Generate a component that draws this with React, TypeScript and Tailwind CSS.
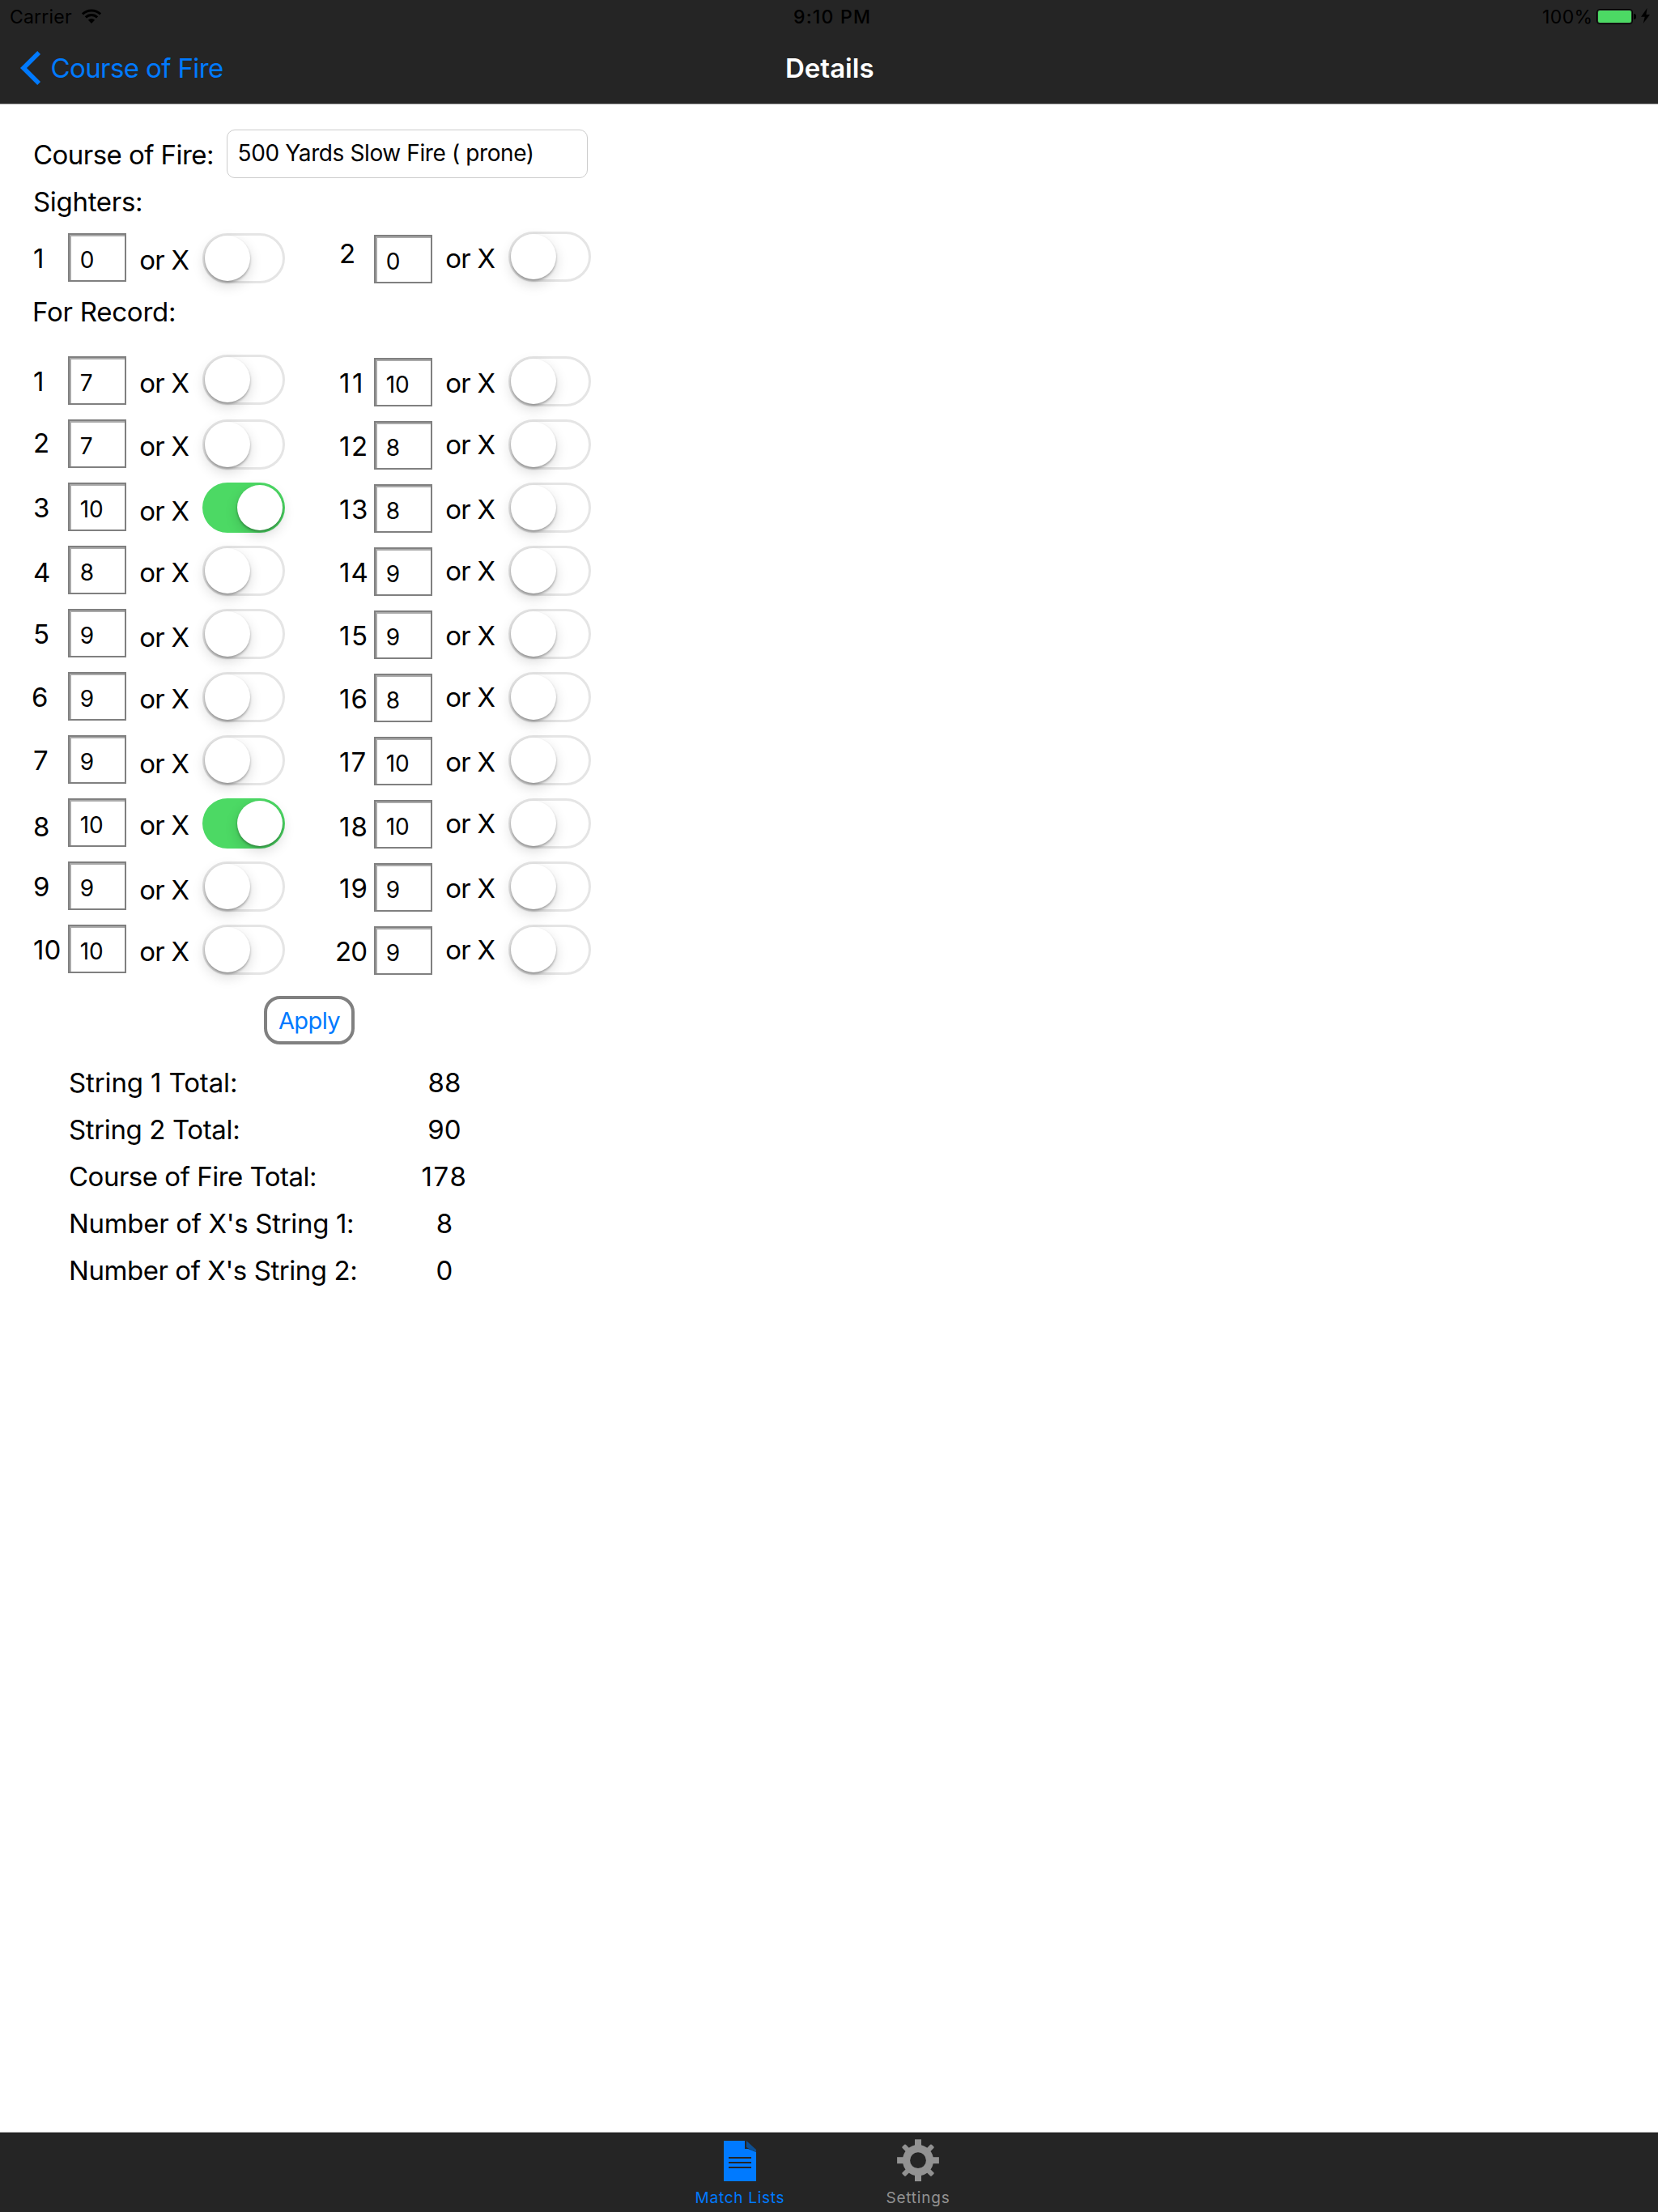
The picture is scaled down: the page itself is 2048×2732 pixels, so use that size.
type Shot = {
  no: string;
  value: string;
  on?: boolean;
  noClass: string;
  orClass?: string;
  toggleClass?: string;
};

const sighterLeft: Shot = { no: "1", value: "0", noClass: "mt-[11px]" };
const sighterRight: Shot = {
  no: "2",
  value: "0",
  noClass: "mt-[5px]",
  orClass: "mt-[11px]",
  toggleClass: "-mt-[2px]",
};

const stringOne: Shot[] = [
  { no: "1", value: "7", noClass: "mt-[11px]", toggleClass: "-mt-[2px]" },
  { no: "2", value: "7", noClass: "mt-[9px]" },
  { no: "3", value: "10", on: true, noClass: "mt-[11px]", orClass: "mt-[15px]" },
  { no: "4", value: "8", noClass: "mt-[13px]" },
  { no: "5", value: "9", noClass: "mt-[11px]", orClass: "mt-[15px]" },
  { no: "6", value: "9", noClass: "mt-[11px] -indent-[2px]" },
  { no: "7", value: "9", noClass: "mt-[11px]", orClass: "mt-[15px]" },
  { no: "8", value: "10", on: true, noClass: "mt-[15px]" },
  { no: "9", value: "9", noClass: "mt-[11px]", orClass: "mt-[15px]" },
  { no: "10", value: "10", noClass: "mt-[11px] tracking-[0px]" },
];

const stringTwo: Shot[] = [
  { no: "11", value: "10", noClass: "mt-[13px] tracking-[2.7px]" },
  { no: "12", value: "8", noClass: "mt-[13px] tracking-[1.6px]", orClass: "mt-[11px]" },
  { no: "13", value: "8", noClass: "mt-[13px] tracking-[1.6px]" },
  { no: "14", value: "9", noClass: "mt-[13px] tracking-[1.2px]", orClass: "mt-[11px]" },
  { no: "15", value: "9", noClass: "mt-[13px] tracking-[1.6px]" },
  { no: "16", value: "8", noClass: "mt-[13px] tracking-[1.2px]", orClass: "mt-[11px]" },
  { no: "17", value: "10", noClass: "mt-[13px] tracking-[1.2px]" },
  { no: "18", value: "10", noClass: "mt-[15px] tracking-[1.2px]", orClass: "mt-[11px]" },
  { no: "19", value: "9", noClass: "mt-[13px] tracking-[1.2px]" },
  { no: "20", value: "9", noClass: "mt-[13px] -indent-[5px] tracking-[-0.8px]", orClass: "mt-[11px]" },
];

const totals = [
  { label: "String 1 Total:", value: "88", labelClass: "tracking-[-0.12px]", valueClass: "tracking-[0.2px]" },
  { label: "String 2 Total:", value: "90", labelClass: "tracking-[-0.37px]", valueClass: "tracking-[0.2px]" },
  { label: "Course of Fire Total:", value: "178", labelClass: "tracking-[-0.49px]", valueClass: "tracking-[1.7px]" },
  { label: "Number of X's String 1:", value: "8", labelClass: "tracking-[-0.32px]", valueClass: "" },
  { label: "Number of X's String 2:", value: "0", labelClass: "tracking-[-0.44px]", valueClass: "" },
];

function Toggle({ on, className }: { on?: boolean; className: string }) {
  return (
    <div
      role="switch"
      aria-checked={!!on}
      className={`flex h-[62px] w-[102px] shrink-0 rounded-full ${
        on ? "justify-end bg-[#4cd964] p-[3px]" : "border-[3px] border-[#e5e5e5] bg-white"
      } ${className}`}
    >
      <div className="size-[56px] rounded-full bg-white shadow-[0_6px_16px_rgba(0,0,0,0.15),0_2px_3px_rgba(0,0,0,0.3)]" />
    </div>
  );
}

function ShotRow({ shot, boxClass }: { shot: Shot; boxClass: string }) {
  return (
    <div className="flex h-[60px] w-[378px] items-start leading-[40px]">
      <div className={`w-[43px] shrink-0 whitespace-nowrap ${shot.noClass}`}>{shot.no}</div>
      <div
        className={`h-[60px] w-[72px] shrink-0 border-2 border-[#808080] bg-white pt-[14px] pl-[12.7px] text-[28px] leading-[34px] shadow-[inset_2px_2px_0_#aaaaaa] ${boxClass}`}
      >
        {shot.value}
      </div>
      <div className={`w-[94px] shrink-0 pl-[16.3px] tracking-[-0.8px] ${shot.orClass ?? "mt-[13px]"}`}>or X</div>
      <Toggle on={shot.on} className={shot.toggleClass ?? ""} />
    </div>
  );
}

function StatusBar() {
  return (
    <div className="grid h-[40px] grid-cols-[980px_925px_auto] pt-[7px] text-[23px] leading-[28px] text-black">
      <div className="flex pl-[12px]">
        <span className="w-[89px] tracking-[0.2px]">Carrier</span>
        <svg className="mt-[4px]" width="24" height="18" viewBox="0 0 24 18" fill="none">
          <path d="M0.9 6.5A16 16 0 0 1 23.1 6.5" stroke="#000" strokeWidth="3" />
          <path d="M4.8 10.4A10.3 10.3 0 0 1 19.2 10.4" stroke="#000" strokeWidth="2.9" />
          <path d="M12 17.9L7.9 13.8A5.7 5.7 0 0 1 16.1 13.8Z" fill="#000" />
        </svg>
      </div>
      <div className="font-medium tracking-[1.2px]">9:10 PM</div>
      <div className="flex">
        <span className="w-[67px] tracking-[0.4px]">100%</span>
        <div className="mt-[4px] h-[19px] w-[45px] rounded-[4px] border border-black p-px">
          <div className="h-full rounded-[2px] bg-[#4cd964]" />
        </div>
        <div className="mt-[10px] ml-px h-[7px] w-[3px] rounded-r-[3px] bg-black" />
        <svg className="mt-[3px] ml-[6px]" width="11" height="19" viewBox="0 0 11 19">
          <path d="M7.6 0L0 10.8H4.7L2.7 19L11 8H6.4Z" fill="#000" />
        </svg>
      </div>
    </div>
  );
}

function NavBar() {
  return (
    <div className="grid grow grid-cols-[970px_auto] pt-[24px] text-[33px] leading-[40px]">
      <div className="flex pl-[25px] text-[#007aff]">
        <svg className="-mt-px" width="25" height="42" viewBox="0 0 25 42">
          <path d="M21.2 0L25 3.9L8 21L25 38.1L21.2 42L0 21Z" fill="currentColor" />
        </svg>
        <span className="ml-[12.5px] tracking-[-0.61px]">Course of Fire</span>
      </div>
      <h1 className="font-semibold text-white">Details</h1>
    </div>
  );
}

function DocumentIcon() {
  return (
    <svg width="60" height="60" viewBox="0 0 60 60">
      <path d="M10 6H36V16H40L50 20V56H10Z" fill="#007aff" />
      <path d="M38 6L50 17V20L45 18L38 14Z" fill="#0d4f92" />
      <path d="M16 26H44V28H16ZM16 32H44V34H16ZM16 38H44V40H16Z" fill="#252525" />
    </svg>
  );
}

function GearIcon() {
  return (
    <svg width="60" height="60" viewBox="0 0 60 60" fill="#929292">
      <circle cx="30" cy="30.2" r="14.5" fill="none" stroke="#929292" strokeWidth="9.2" />
      {[0, 90, 180, 270].map((a) => (
        <rect key={a} x="26" y="4.3" width="8" height="9" transform={`rotate(${a} 30 30.2)`} />
      ))}
      {[45, 135, 225, 315].map((a) => (
        <rect key={a} x="27" y="4.6" width="6" height="10" rx="1.2" transform={`rotate(${a} 30 30.2)`} />
      ))}
    </svg>
  );
}

function TabBar() {
  return (
    <nav className="flex h-[99px] shrink-0 justify-center border-t border-[#acacac] bg-[#252525] pt-[4px] text-[19px] leading-[23px]">
      <div className="flex w-[220px] flex-col items-center gap-[5px] text-[#007aff]">
        <DocumentIcon />
        <span className="tracking-[0.73px]">Match Lists</span>
      </div>
      <div className="flex w-[220px] flex-col items-center gap-[5px] text-[#929292]">
        <GearIcon />
        <span className="tracking-[0.8px]">Settings</span>
      </div>
    </nav>
  );
}

export default function App() {
  return (
    <div className="flex h-[2732px] w-[2048px] flex-col overflow-hidden bg-white font-['Inter',sans-serif] text-black">
      <header className="flex h-[129px] shrink-0 flex-col border-b border-[#acacac] bg-[#252525]">
        <StatusBar />
        <NavBar />
      </header>

      <main className="flex grow flex-col pt-[31px] pl-[41px] text-[33px] leading-[40px]">
        <div className="flex h-[60px]">
          <div className="mt-[11px] w-[239px] tracking-[-0.55px]">Course of Fire:</div>
          <div className="w-[446px] rounded-[10px] border border-[#cccccc] pt-[11px] pl-[12.5px] text-[28px] leading-[34px] tracking-[-0.39px]">
            500 Yards Slow Fire ( prone)
          </div>
        </div>
        <div className="mt-[9px] tracking-[-0.31px]">Sighters:</div>
        <div className="mt-[19px] flex">
          <ShotRow shot={sighterLeft} boxClass="" />
          <ShotRow shot={sighterRight} boxClass="mt-[2px]" />
        </div>
        <div className="mt-[17px] -ml-px tracking-[-0.24px]">For Record:</div>
        <div className="mt-[35px] flex">
          <div className="flex flex-col gap-[18px]">
            {stringOne.map((s) => (
              <ShotRow key={s.no} shot={s} boxClass="" />
            ))}
          </div>
          <div className="flex flex-col gap-[18px]">
            {stringTwo.map((s) => (
              <ShotRow key={s.no} shot={s} boxClass="mt-[2px]" />
            ))}
          </div>
        </div>
        <button className="mt-[28px] ml-[285px] flex h-[60px] w-[112px] justify-center rounded-[20px] border-4 border-[#808080] pt-[9px] text-[29px] leading-[35px] tracking-[-0.57px] text-[#007aff]">
          Apply
        </button>
        <div className="mt-[27px] ml-[44px] flex flex-col gap-[18px]">
          {totals.map((t) => (
            <div key={t.label} className="flex">
              <div className={`w-[404px] ${t.labelClass}`}>{t.label}</div>
              <div className={`w-[120px] text-center ${t.valueClass}`}>{t.value}</div>
            </div>
          ))}
        </div>
      </main>

      <TabBar />
    </div>
  );
}
